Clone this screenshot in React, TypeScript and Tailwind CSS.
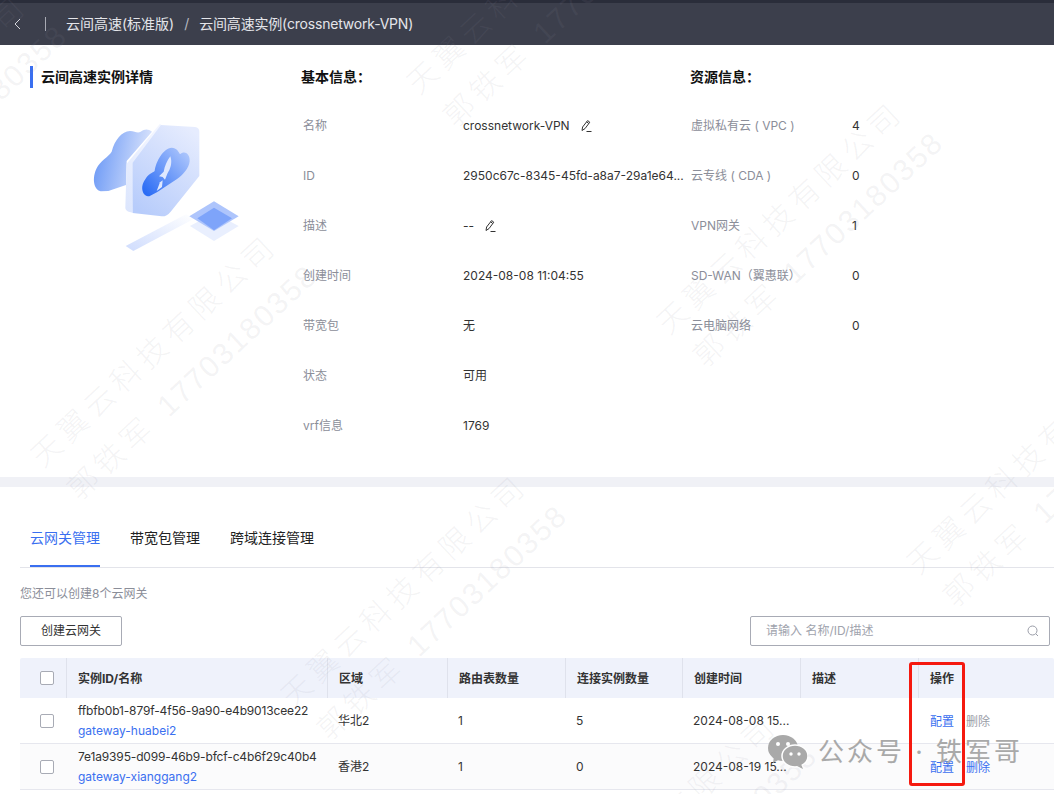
import React from "react";

const font = "font-['Inter','Noto_Sans_CJK_SC',sans-serif]";

function Pencil() {
  return (
    <svg width="14" height="14" viewBox="0 0 14 14" fill="none" stroke="#333" strokeWidth="1" className="shrink-0">
      <path d="M3 11.5 L3.6 8 L8.6 1.6 L10.8 3.2 L6 9.6 Z" />
      <path d="M7.6 2.8 L9.8 4.5" />
      <path d="M7.5 12.5 H12.5" />
    </svg>
  );
}

function Illustration() {
  return (
    <svg width="170" height="150" viewBox="0 0 510 450" className="block">
      <defs>
        <linearGradient id="c1" x1="0" y1="0" x2="1" y2="0.2">
          <stop offset="0" stopColor="#6393f5" />
          <stop offset="1" stopColor="#d9e3fc" />
        </linearGradient>
        <linearGradient id="h1" x1="0.8" y1="0" x2="0.2" y2="1">
          <stop offset="0" stopColor="#e6ecfe" />
          <stop offset="1" stopColor="#b7ccfb" />
        </linearGradient>
        <linearGradient id="h2" x1="0" y1="1" x2="0.6" y2="0">
          <stop offset="0" stopColor="#dbe5fd" />
          <stop offset="1" stopColor="#f2f5ff" />
        </linearGradient>
        <linearGradient id="c2" x1="0.05" y1="0.9" x2="0.95" y2="0.1">
          <stop offset="0" stopColor="#2c6df5" />
          <stop offset="1" stopColor="#adc6fc" />
        </linearGradient>
        <linearGradient id="b1" x1="0" y1="1" x2="1" y2="0">
          <stop offset="0" stopColor="#cfdcfd" />
          <stop offset="1" stopColor="#ffffff" />
        </linearGradient>
      </defs>
      <path d="M62 241 C40 236 36 200 50 172 C60 150 85 138 95 122 C105 85 125 62 150 60 C165 60 172 68 182 62 C195 53 205 54 216 62 L140 150 L138 222 L85 240 Z" fill="url(#c1)" />
      <path d="M240 38 L140 158 L136 290 Q136 298 146 302 L158 305 L160 155 L245 44 Z" fill="url(#h2)" />
      <path d="M158 155 L243 42 L345 48 Q358 50 358 62 L358 195 L272 302 Q260 317 245 316 L158 306 Z" fill="url(#h1)" />
      <path d="M208 256 C186 256 180 226 195 206 C205 188 218 186 224 180 C228 150 250 112 275 110 C290 110 296 122 300 130 C312 118 330 126 329 150 C327 172 310 190 290 205 L232 243 Z" fill="url(#c2)" />
      <path d="M271 136 C262 148 254 165 251 182 L237 196 L248 198 L255 206 L262 188 C271 175 278 155 271 136 Z" fill="#dfe8fe" />
      <path d="M240 214 L248 208 L246 228 L230 240 Z" fill="#dfe8fe" />
      <path d="M137 405 L318 310 L345 322 L160 420 Z" fill="url(#b1)" />
      <path d="M330 345 L402 306 L476 345 L402 390 Z" fill="#e9effe" />
      <path d="M328 316 L402 271 L476 316 L402 360 Z" fill="#aec5fc" />
      <path d="M352 322 L402 290 L456 322 L402 358 Z" fill="#7ea4fa" />
    </svg>
  );
}

function Row({ label, children, w }: { label: string; children: React.ReactNode; w: string }) {
  return (
    <div className="flex h-[50px] items-center text-xs">
      <div className={`${w} text-[#8b8e99]`}>{label}</div>
      <div className="flex items-center text-[#333]">{children}</div>
    </div>
  );
}

function Checkbox() {
  return <div className="h-[14px] w-[14px] rounded-[2px] border border-[#a8abb5] bg-white" />;
}

function Th({ w, children, last }: { w: string; children?: React.ReactNode; last?: boolean }) {
  return (
    <div className={`${w} flex h-full items-center ${last ? "" : "border-r border-[#dfe2ec]"} pl-[11px] pt-[2px] text-xs font-bold text-[#333]`}>
      {children}
    </div>
  );
}

function Td({ w, children }: { w: string; children?: React.ReactNode }) {
  return <div className={`${w} pl-[10px] text-xs text-[#333]`}>{children}</div>;
}

function TableRow({ id, name, region, routes, conns, time, del, bg }: { id: string; name: string; region: string; routes: string; conns: string; time: string; del: string; bg: string }) {
  return (
    <div className={`flex h-[46px] items-center border-b border-[#e6e7ee] ${bg}`}>
      <div className="flex w-[47px] justify-center pl-[7px]"><Checkbox /></div>
      <div className="w-[261px] pl-[11px] text-xs leading-[20px]">
        <div className="whitespace-nowrap tracking-[-0.15px] text-[#333]">{id}</div>
        <div className="whitespace-nowrap text-[#3a6ff0]">{name}</div>
      </div>
      <Td w="w-[120px]">{region}</Td>
      <Td w="w-[118px]">{routes}</Td>
      <Td w="w-[117px]">{conns}</Td>
      <Td w="w-[118px]">{time}</Td>
      <Td w="w-[118px]" />
      <div className="flex w-[135px] gap-[12px] pl-[11px] pt-[3px] text-xs text-[#3a6ff0]">
        <span>配置</span>
        <span className={del}>删除</span>
      </div>
    </div>
  );
}

const wmLine = "whitespace-nowrap text-[30px] leading-[34px] font-light tracking-[6px] text-[#8c8c9c]/[0.1]";

function Watermark({ pos }: { pos: string }) {
  return (
    <div className={`pointer-events-none absolute ${pos} origin-top-left rotate-[-43deg]`}>
      <div className={wmLine}>天翼云科技有限公司</div>
      <div className={`${wmLine} ml-[4px] mt-[15px]`}>
        郭铁军 <span className="font-['Liberation_Sans',sans-serif] tracking-[2px]">17703180358</span>
      </div>
    </div>
  );
}

export default function App() {
  return (
    <div className={`relative h-[794px] w-[1054px] overflow-hidden bg-white ${font}`}>
      <header className="flex h-[45px] items-center border-t-[3px] border-[#2a2d3a] bg-[#3c3f4c] text-sm text-[#e4e5ea]">
        <svg width="10" height="12" viewBox="0 0 10 12" fill="none" stroke="#d5d6dc" strokeWidth="1" className="ml-[13px]">
          <path d="M7 1 L2 6 L7 11" />
        </svg>
        <div className="ml-[22px] h-[14px] w-px bg-[#a8aab3]" />
        <span className="ml-[20px]">云间高速(标准版)</span>
        <span className="mx-[10px] text-[#b5b7c0]">/</span>
        <span className="tracking-[-0.2px]">云间高速实例(crossnetwork-VPN)</span>
      </header>

      <section className="flex h-[432px] pl-[30px] pt-[21px]">
        <div className="w-[271px]">
          <div className="flex h-[22px] items-center border-l-[3px] border-[#3a6ff0] pl-[8px] text-sm font-bold text-[#111]">云间高速实例详情</div>
          <div className="ml-[50px] mt-[23px]"><Illustration /></div>
        </div>
        <div className="w-[389px]">
          <div className="flex h-[22px] items-center text-sm font-bold text-[#111]">基本信息：</div>
          <div className="mt-[13px]">
            <Row w="w-[162px] pl-[2px]" label="名称"><span>crossnetwork-VPN</span><span className="ml-[9px]"><Pencil /></span></Row>
            <Row w="w-[162px] pl-[2px]" label="ID"><span className="whitespace-nowrap">2950c67c-8345-45fd-a8a7-29a1e64...</span></Row>
            <Row w="w-[162px] pl-[2px]" label="描述"><span>--</span><span className="ml-[9px]"><Pencil /></span></Row>
            <Row w="w-[162px] pl-[2px]" label="创建时间">2024-08-08 11:04:55</Row>
            <Row w="w-[162px] pl-[2px]" label="带宽包">无</Row>
            <Row w="w-[162px] pl-[2px]" label="状态">可用</Row>
            <Row w="w-[162px] pl-[2px]" label="vrf信息">1769</Row>
          </div>
        </div>
        <div className="flex-1">
          <div className="flex h-[22px] items-center text-sm font-bold text-[#111]">资源信息：</div>
          <div className="mt-[13px]">
            <Row w="w-[162px] pl-[1px]" label="虚拟私有云 ( VPC )">4</Row>
            <Row w="w-[162px] pl-[1px]" label="云专线 ( CDA )">0</Row>
            <Row w="w-[162px] pl-[1px]" label="VPN网关">1</Row>
            <Row w="w-[162px] pl-[1px]" label="SD-WAN（翼惠联）">0</Row>
            <Row w="w-[162px] pl-[1px]" label="云电脑网络">0</Row>
          </div>
        </div>
      </section>

      <div className="h-[10px] bg-[#f0f1f6]" />

      <div className="pl-[20px]">
        <nav className="flex h-[81px] items-end border-b border-[#e3e4ea] pl-[10px] text-sm text-[#222]">
          <div className="flex h-[39px] items-start border-b-2 border-[#3a6ff0] text-[#3a6ff0]">云网关管理</div>
          <div className="ml-[30px] h-[39px]">带宽包管理</div>
          <div className="ml-[30px] h-[39px]">跨域连接管理</div>
        </nav>
        <p className="mt-[18px] text-xs leading-[16px] text-[#8b8e99]">您还可以创建8个云网关</p>
        <div className="mt-[14px] flex items-center justify-between pr-[4px]">
          <button className="h-[30px] w-[102px] rounded-[2px] border border-[#a8abb5] text-xs text-[#333]">创建云网关</button>
          <div className="flex h-[30px] w-[300px] items-center justify-between rounded-[2px] border border-[#a8abb5] pl-[15px] pr-[10px] text-xs text-[#a0a3ad]">
            <span>请输入 名称/ID/描述</span>
            <svg width="12" height="12" viewBox="0 0 12 12" fill="none" stroke="#9a9da8" strokeWidth="1">
              <circle cx="5.5" cy="5.5" r="4.5" />
              <path d="M9 9 L11 11" />
            </svg>
          </div>
        </div>
        <div className="mt-[12px]">
          <div className="flex h-[40px] items-center rounded-t-[2px] bg-[#eff2fb]">
            <div className="flex h-full w-[47px] items-center justify-center border-r border-[#dfe2ec] pl-[7px]"><Checkbox /></div>
            <Th w="w-[261px]">实例ID/名称</Th>
            <Th w="w-[120px]">区域</Th>
            <Th w="w-[118px]">路由表数量</Th>
            <Th w="w-[117px]">连接实例数量</Th>
            <Th w="w-[118px]">创建时间</Th>
            <Th w="w-[118px]">描述</Th>
            <Th w="w-[135px]" last>操作</Th>
          </div>
          <TableRow id="ffbfb0b1-879f-4f56-9a90-e4b9013cee22" name="gateway-huabei2" region="华北2" routes="1" conns="5" time="2024-08-08 15..." del="text-[#9a9da8]" bg="bg-white" />
          <TableRow id="7e1a9395-d099-46b9-bfcf-c4b6f29c40b4" name="gateway-xianggang2" region="香港2" routes="1" conns="0" time="2024-08-19 15..." del="" bg="bg-[#fbfbfc]" />
        </div>
      </div>

      <Watermark pos="left-[-226px] top-[208px]" />
      <Watermark pos="left-[24px] top-[448px]" />
      <Watermark pos="left-[274px] top-[688px]" />
      <Watermark pos="left-[400px] top-[75px]" />
      <Watermark pos="left-[650px] top-[315px]" />
      <Watermark pos="left-[900px] top-[555px]" />
      <Watermark pos="left-[524px] top-[928px]" />

      <div className="pointer-events-none absolute left-[909px] top-[662px] h-[124px] w-[56px] rounded-[3px] border-[3px] border-[#f5190f]" />

      <div className="pointer-events-none absolute left-[768px] top-[735px] flex items-center">
        <svg width="40" height="34" viewBox="0 0 40 34" fill="#a9a9a9">
          <ellipse cx="15" cy="13" rx="15" ry="13" />
          <path d="M6 21 L5 28 L12 24 Z" />
          <ellipse cx="27" cy="21" rx="13" ry="11" fill="#a9a9a9" stroke="#fff" strokeWidth="1.5" />
          <path d="M33 29 L35 34 L29 31 Z" />
          <circle cx="10" cy="9" r="2" fill="#fff" />
          <circle cx="20" cy="9" r="2" fill="#fff" />
          <circle cx="23" cy="19" r="1.7" fill="#fff" />
          <circle cx="31" cy="19" r="1.7" fill="#fff" />
        </svg>
        <span className="ml-[10px] whitespace-nowrap text-[26px] leading-[34px] tracking-[3px] text-[#a9a9a9]">公众号 · 铁军哥</span>
      </div>
    </div>
  );
}
